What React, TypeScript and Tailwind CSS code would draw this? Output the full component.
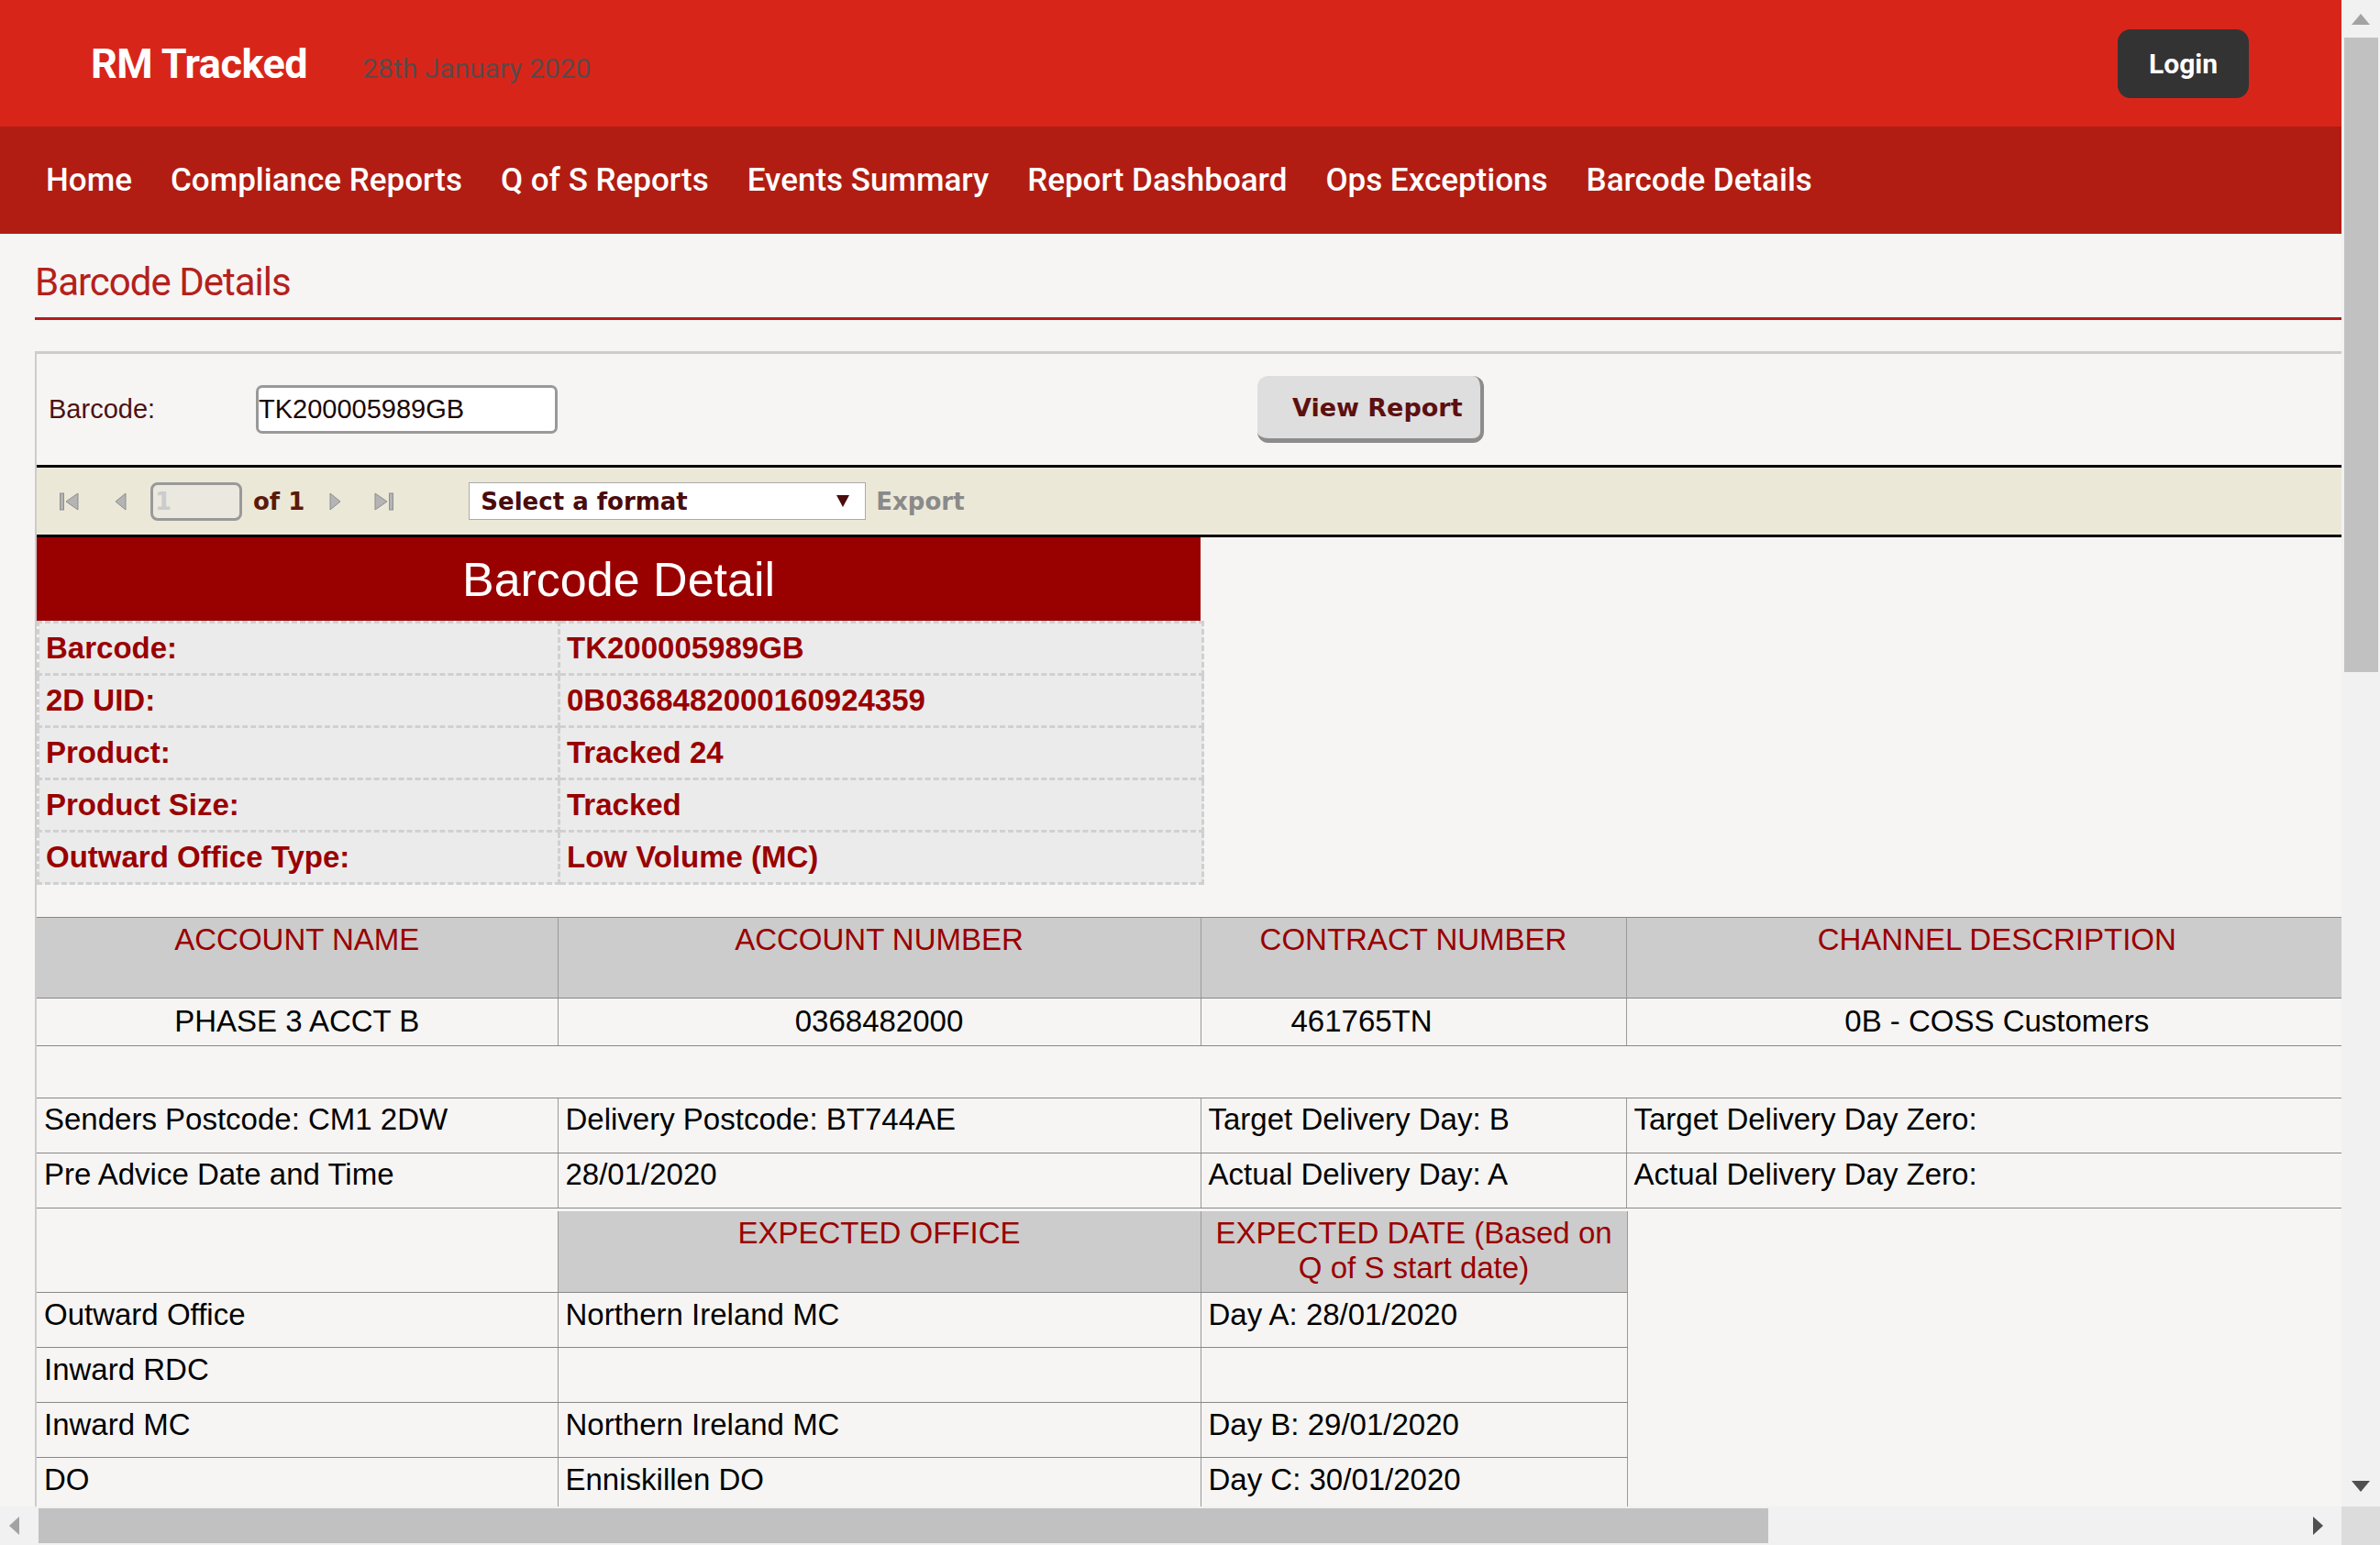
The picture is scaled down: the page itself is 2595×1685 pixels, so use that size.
import React from "react";

const navItems = [
  "Home",
  "Compliance Reports",
  "Q of S Reports",
  "Events Summary",
  "Report Dashboard",
  "Ops Exceptions",
  "Barcode Details",
];

const details: [string, string][] = [
  ["Barcode:", "TK200005989GB"],
  ["2D UID:", "0B0368482000160924359"],
  ["Product:", "Tracked 24"],
  ["Product Size:", "Tracked"],
  ["Outward Office Type:", "Low Volume (MC)"],
];

function FirstIcon() {
  return (
    <svg width="22" height="22" viewBox="0 0 22 22">
      <rect x="0.5" y="2" width="4" height="18" fill="#b4b4b4" stroke="#8e8e8e" strokeWidth="1" />
      <polygon points="20,2 20,20 7,11" fill="#b4b4b4" stroke="#8e8e8e" strokeWidth="1" />
    </svg>
  );
}
function PrevIcon() {
  return (
    <svg width="13" height="22" viewBox="0 0 13 22">
      <polygon points="12,2 12,20 1,11" fill="#b4b4b4" stroke="#8e8e8e" strokeWidth="1" />
    </svg>
  );
}
function NextIcon() {
  return (
    <svg width="13" height="22" viewBox="0 0 13 22">
      <polygon points="1,2 1,20 12,11" fill="#b4b4b4" stroke="#8e8e8e" strokeWidth="1" />
    </svg>
  );
}
function LastIcon() {
  return (
    <svg width="22" height="22" viewBox="0 0 22 22">
      <polygon points="2,2 2,20 15,11" fill="#b4b4b4" stroke="#8e8e8e" strokeWidth="1" />
      <rect x="17.5" y="2" width="4" height="18" fill="#b4b4b4" stroke="#8e8e8e" strokeWidth="1" />
    </svg>
  );
}

function Page() {
  return (
    <div className="w-[2553px]">
      <header className="h-[138px] bg-[#d8251a] flex items-center pl-[99px] pr-[101px] font-['Roboto',sans-serif]">
        <div className="flex items-baseline">
          <span className="text-white text-[45px] font-bold tracking-[-0.5px] leading-none">RM Tracked</span>
          <span className="ml-[60px] text-[30px] text-[#5a4a48] leading-none">28th January 2020</span>
        </div>
        <button className="ml-auto w-[143px] h-[75px] rounded-[14px] bg-[#333333] text-white text-[30px] font-bold font-['Roboto',sans-serif]">
          Login
        </button>
      </header>
      <nav className="h-[117px] bg-[#b11d13] flex items-center pl-[50px] gap-[42px] font-['Roboto',sans-serif] text-white text-[35px] font-medium">
        {navItems.map((n) => (
          <span key={n} className="leading-none">
            {n}
          </span>
        ))}
      </nav>
      <main className="pl-[38px] font-['Liberation_Sans',Arial,sans-serif]">
        <h1 className="pt-[29px] h-[76px] leading-[48px] text-[42px] tracking-[-1px] text-[#b5201b] font-['Roboto',sans-serif]">
          Barcode Details
        </h1>
        <div className="mt-[15px] h-[3px] bg-[#b31b1b]" />
        <div className="mt-[34px] border-t-[3px] border-l-[2px] border-[#cccccc]">
          {/* parameter row */}
          <div className="h-[121px] flex items-center">
            <span className="pl-[13px] w-[239px] text-[29px] text-[#4d1111]">Barcode:</span>
            <div className="w-[329px] h-[53px] rounded-[7px] border-[3px] border-[#999999] bg-white flex items-center text-[29px] text-[#1a0505]">
              TK200005989GB
            </div>
            <button className="ml-[763px] w-[247px] h-[73px] rounded-[12px] bg-[#dedede] border-r-[4px] border-b-[5px] border-[#8c8c8c] text-left pl-[38px] pt-[3px] text-[27px] font-bold text-[#5c1010] font-['DejaVu_Sans',Verdana,sans-serif]">
              View Report
            </button>
          </div>
          {/* toolbar */}
          <div className="h-[79px] border-t-[3px] border-b-[3px] border-black bg-[#ece8d8] flex items-center font-['DejaVu_Sans',Verdana,sans-serif] font-bold text-[26px]">
            <div className="ml-[25px]">
              <FirstIcon />
            </div>
            <div className="ml-[38px]">
              <PrevIcon />
            </div>
            <div className="ml-[26px] w-[100px] h-[42px] rounded-[8px] border-[3px] border-[#999999] bg-[#ebe9df] flex items-center pl-[2px] text-[#cccccc] leading-none">
              1
            </div>
            <span className="ml-[12px] text-[#5a1a0a] leading-none">of 1</span>
            <div className="ml-[27px]">
              <NextIcon />
            </div>
            <div className="ml-[35px]">
              <LastIcon />
            </div>
            <div className="ml-[82px] w-[433px] h-[41px] bg-white border border-[#aaaaaa] flex items-center pl-[12px] pr-[16px] text-[#4a0c0c]">
              <span className="leading-none">Select a format</span>
              <svg className="ml-auto" width="16" height="15" viewBox="0 0 16 15">
                <polygon points="1,1 15,1 8,14" fill="#4a0c0c" />
              </svg>
            </div>
            <span className="ml-[11px] text-[#8a8a8a] leading-none">Export</span>
          </div>
          {/* barcode detail */}
          <div className="w-[1269px] h-[91px] bg-[#990000] flex items-center justify-center text-white text-[52px]">
            Barcode Detail
          </div>
          <table className="border-collapse table-fixed w-[1270px]">
            <colgroup>
              <col className="w-[568px]" />
              <col className="w-[702px]" />
            </colgroup>
            <tbody>
              {details.map(([k, v]) => (
                <tr key={k}>
                  <td className="h-[57px] border-[3px] border-dashed border-[#d0d0d0] bg-[#ebebeb] pl-[7px] text-[33px] font-bold text-[#990000] align-middle leading-[38px]">
                    {k}
                  </td>
                  <td className="h-[57px] border-[3px] border-dashed border-[#d0d0d0] bg-[#ebebeb] pl-[7px] text-[33px] font-bold text-[#990000] align-middle leading-[38px]">
                    {v}
                  </td>
                </tr>
              ))}
            </tbody>
          </table>
          {/* account table */}
          <table className="mt-[35px] border-collapse table-fixed w-[2541px] text-[33px] leading-[38px]">
            <colgroup>
              <col className="w-[568px]" />
              <col className="w-[701px]" />
              <col className="w-[464px]" />
              <col className="w-[808px]" />
            </colgroup>
            <tbody>
              <tr className="h-[88px] bg-[#cccccc] text-[#990000]">
                {["ACCOUNT NAME", "ACCOUNT NUMBER", "CONTRACT NUMBER", "CHANNEL DESCRIPTION"].map((h, i) => (
                  <td
                    key={h}
                    className={
                      "align-top pt-[5px] text-center border-t border-b border-[#888888] " +
                      (i > 0 ? "border-l border-l-[#9a9a9a]" : "")
                    }
                  >
                    {h}
                  </td>
                ))}
              </tr>
              <tr className="h-[52px] text-black">
                <td className="align-top pt-[6px] text-center border-b border-[#888888]">PHASE 3 ACCT B</td>
                <td className="align-top pt-[6px] text-center border-b border-l border-[#888888] border-l-[#9a9a9a]">0368482000</td>
                <td className="align-top pt-[6px] text-left pl-[98px] border-b border-l border-[#888888] border-l-[#9a9a9a]">461765TN</td>
                <td className="align-top pt-[6px] text-center border-b border-l border-[#888888] border-l-[#9a9a9a]">0B - COSS Customers</td>
              </tr>
            </tbody>
          </table>
          {/* postcode table */}
          <table className="mt-[56px] border-collapse table-fixed w-[2541px] text-[33px] leading-[38px] text-black">
            <colgroup>
              <col className="w-[568px]" />
              <col className="w-[701px]" />
              <col className="w-[464px]" />
              <col className="w-[808px]" />
            </colgroup>
            <tbody>
              {[
                ["Senders Postcode: CM1 2DW", "Delivery Postcode: BT744AE", "Target Delivery Day: B", "Target Delivery Day Zero:"],
                ["Pre Advice Date and Time", "28/01/2020", "Actual Delivery Day: A", "Actual Delivery Day Zero:"],
              ].map((row, r) => (
                <tr key={r} className="h-[60px]">
                  {row.map((c, i) => (
                    <td
                      key={i}
                      className={
                        "align-top pt-[4px] pl-[8px] whitespace-nowrap border-t border-b border-[#888888] " +
                        (i > 0 ? "border-l border-l-[#9a9a9a]" : "")
                      }
                    >
                      {c}
                    </td>
                  ))}
                </tr>
              ))}
            </tbody>
          </table>
          {/* expected table */}
          <table className="mt-[3px] border-collapse table-fixed w-[1734px] text-[33px] leading-[38px] text-black">
            <colgroup>
              <col className="w-[568px]" />
              <col className="w-[701px]" />
              <col className="w-[465px]" />
            </colgroup>
            <tbody>
              <tr className="h-[88px]">
                <td className="border-b border-[#888888]"></td>
                <td className="align-top pt-[5px] text-center bg-[#cccccc] text-[#990000] border-b border-l border-[#888888] border-l-[#9a9a9a]">
                  EXPECTED OFFICE
                </td>
                <td className="align-top pt-[5px] px-[4px] text-center bg-[#cccccc] text-[#990000] border-b border-l border-r border-[#888888] border-l-[#9a9a9a] border-r-[#9a9a9a]">
                  EXPECTED DATE (Based on Q of S start date)
                </td>
              </tr>
              {[
                ["Outward Office", "Northern Ireland MC", "Day A: 28/01/2020"],
                ["Inward RDC", "", ""],
                ["Inward MC", "Northern Ireland MC", "Day B: 29/01/2020"],
                ["DO", "Enniskillen DO", "Day C: 30/01/2020"],
                ["", "", ""],
              ].map((row, r) => (
                <tr key={r} className="h-[60px]">
                  {row.map((c, i) => (
                    <td
                      key={i}
                      className={
                        "align-top pt-[5px] pl-[8px] whitespace-nowrap border-b border-[#888888] " +
                        (i > 0 ? "border-l border-l-[#9a9a9a] " : "") +
                        (i === 2 ? "border-r border-r-[#9a9a9a]" : "")
                      }
                    >
                      {c}
                    </td>
                  ))}
                </tr>
              ))}
            </tbody>
          </table>
        </div>
      </main>
    </div>
  );
}

function VScroll() {
  return (
    <div className="w-[42px] h-full bg-[#f1f1f1] flex flex-col">
      <div className="h-[41px] flex items-center justify-center">
        <svg width="20" height="12" viewBox="0 0 20 12">
          <polygon points="10,0 20,12 0,12" fill="#a3a3a3" />
        </svg>
      </div>
      <div className="h-[692px] ml-[3px] mr-[2px] bg-[#c1c1c1]" />
      <div className="flex-1" />
      <div className="h-[44px] flex items-center justify-center">
        <svg width="20" height="12" viewBox="0 0 20 12">
          <polygon points="0,0 20,0 10,12" fill="#505050" />
        </svg>
      </div>
    </div>
  );
}

function HScroll() {
  return (
    <div className="h-[42px] flex">
      <div className="w-[2553px] h-full bg-[#f1f1f1] flex items-center">
        <div className="w-[42px] h-full flex items-center justify-center pr-[12px]">
          <svg width="11" height="20" viewBox="0 0 11 20">
            <polygon points="11,0 11,20 0,10" fill="#a3a3a3" />
          </svg>
        </div>
        <div className="w-[1886px] h-[38px] bg-[#c1c1c1]" />
        <div className="flex-1" />
        <div className="w-[42px] h-full flex items-center justify-center pr-[10px]">
          <svg width="11" height="20" viewBox="0 0 11 20">
            <polygon points="0,0 11,10 0,20" fill="#505050" />
          </svg>
        </div>
      </div>
      <div className="w-[42px] h-full bg-[#dcdcdc]" />
    </div>
  );
}

export default function App() {
  return (
    <div className="w-[2595px] h-[1685px] flex flex-col overflow-hidden bg-[#f6f5f3]">
      <div className="flex h-[1643px]">
        <div className="w-[2553px] h-full overflow-hidden">
          <Page />
        </div>
        <VScroll />
      </div>
      <HScroll />
    </div>
  );
}
